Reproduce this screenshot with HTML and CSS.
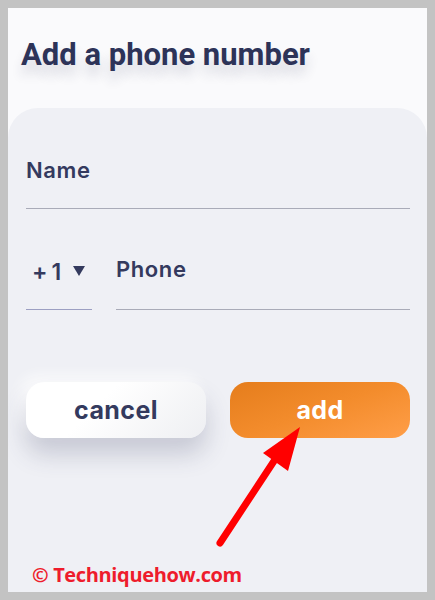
FILE: index.html
```html
<!DOCTYPE html>
<html lang="en">
<head>
  <meta charset="UTF-8" />
  <meta name="viewport" content="width=device-width, initial-scale=1" />
  <title>Add a phone number</title>
  <link rel="stylesheet" href="styles.css">
</head>
<body>
  <div class="frame">
    <h1 class="title">Add a phone number</h1>

    <div class="card">
      <div class="field">
        <span class="label">Name</span>
      </div>

      <div class="phone-row">
        <div class="field code">
          <span class="label">+1</span>
          <svg class="caret" width="12" height="10" viewBox="0 0 12 10">
            <polygon points="0,0 12,0 6,10" fill="#343a5e" />
          </svg>
        </div>
        <div class="field number">
          <span class="label">Phone</span>
        </div>
      </div>

      <div class="actions">
        <button class="btn cancel">cancel</button>
        <button class="btn add">add</button>
      </div>
    </div>

    <!-- red pointer arrow -->
    <svg class="pointer" width="100" height="145" viewBox="0 0 100 145">
      <line x1="12" y1="135" x2="68" y2="50" stroke="#ff0000" stroke-width="7" stroke-linecap="round" />
      <polygon points="92,19 55,45 80,63" fill="#ff0000" />
    </svg>

    <div class="watermark">&copy; Techniquehow.com</div>
  </div>
</body>
</html>
```

FILE: styles.css
```css
body {
  margin: 0;
  padding: 8px;
  background: #c3c3c3;
}

.frame {
  position: relative;
  width: 419px;
  height: 584px;
  background: #fafafc;
  display: flex;
  flex-direction: column;
  overflow: hidden;
}

.title {
  margin: 0;
  padding: 29px 0 0 13px;
  height: 100px;
  box-sizing: border-box;
  font-family: Roboto, "Liberation Sans", sans-serif;
  font-weight: 700;
  font-size: 31px;
  line-height: 36px;
  color: #2d3358;
  text-shadow: 0 10px 12px rgba(40, 44, 80, 0.16);
}

.card {
  flex: 1;
  background: #eff0f5;
  border-radius: 30px 30px 0 0;
  padding: 49px 17px 0 18px;
}

.field {
  border-bottom: 1.5px solid #a9abb8;
  padding-bottom: 25px;
}

.label {
  font-family: Inter, "Liberation Sans", sans-serif;
  font-weight: 600;
  font-size: 22px;
  line-height: 26px;
  letter-spacing: 0.6px;
  color: #343a5e;
}

.phone-row {
  display: flex;
  gap: 24px;
  margin-top: 47px;
}

.phone-row .field {
  padding-bottom: 27px;
}

.code {
  width: 66px;
  box-sizing: border-box;
  padding-left: 6px;
  border-bottom-color: #9c9fc2;
  display: flex;
  align-items: center;
  gap: 8px;
}

.code .label {
  font-size: 23px;
  letter-spacing: 4px;
  position: relative;
  top: 3px;
}

.caret {
  position: relative;
  top: 2px;
}

.number {
  flex: 1;
}

.actions {
  display: flex;
  gap: 24px;
  margin-top: 72px;
}

.btn {
  flex: 1;
  height: 56px;
  border: none;
  border-radius: 18px;
  font-family: Inter, "Liberation Sans", sans-serif;
  font-weight: 700;
  font-size: 25px;
  letter-spacing: 0.4px;
  cursor: pointer;
}

.cancel {
  background: linear-gradient(135deg, #ffffff 40%, #eeeff2);
  color: #343a5e;
  box-shadow: 0 16px 24px rgba(60, 64, 100, 0.22), -6px -6px 14px rgba(255, 255, 255, 0.8);
}

.add {
  background: linear-gradient(160deg, #e57d1c, #f38c2c 50%, #ff9e48);
  color: #ffffff;
}

.pointer {
  position: absolute;
  left: 200px;
  top: 400px;
}

.watermark {
  position: absolute;
  left: 24px;
  top: 553px;
  font-family: "Open Sans", "Liberation Sans", sans-serif;
  font-weight: 700;
  font-size: 20px;
  letter-spacing: -0.35px;
  color: #ee1c2c;
}
```
